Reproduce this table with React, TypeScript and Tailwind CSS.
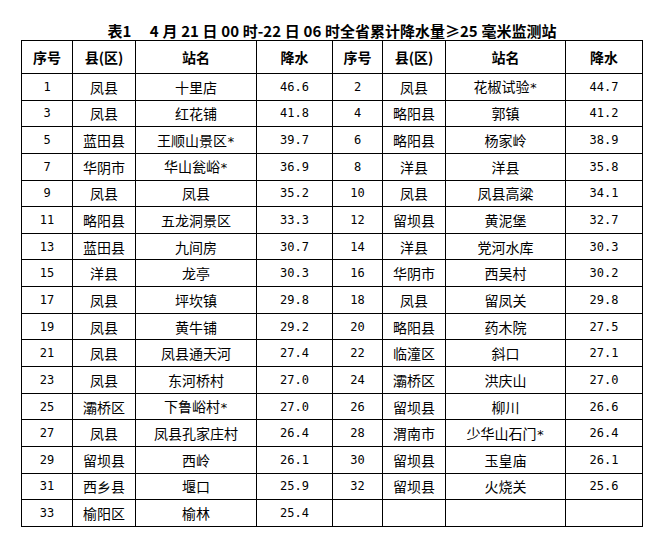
const rows: [string, string, string, string, string, string, string, string][] = [
  ["1", "凤县", "十里店", "46.6", "2", "凤县", "花椒试验*", "44.7"],
  ["3", "凤县", "红花铺", "41.8", "4", "略阳县", "郭镇", "41.2"],
  ["5", "蓝田县", "王顺山景区*", "39.7", "6", "略阳县", "杨家岭", "38.9"],
  ["7", "华阴市", "华山瓮峪*", "36.9", "8", "洋县", "洋县", "35.8"],
  ["9", "凤县", "凤县", "35.2", "10", "凤县", "凤县高粱", "34.1"],
  ["11", "略阳县", "五龙洞景区", "33.3", "12", "留坝县", "黄泥堡", "32.7"],
  ["13", "蓝田县", "九间房", "30.7", "14", "洋县", "党河水库", "30.3"],
  ["15", "洋县", "龙亭", "30.3", "16", "华阴市", "西吴村", "30.2"],
  ["17", "凤县", "坪坎镇", "29.8", "18", "凤县", "留凤关", "29.8"],
  ["19", "凤县", "黄牛铺", "29.2", "20", "略阳县", "药木院", "27.5"],
  ["21", "凤县", "凤县通天河", "27.4", "22", "临潼区", "斜口", "27.1"],
  ["23", "凤县", "东河桥村", "27.0", "24", "灞桥区", "洪庆山", "27.0"],
  ["25", "灞桥区", "下鲁峪村*", "27.0", "26", "留坝县", "柳川", "26.6"],
  ["27", "凤县", "凤县孔家庄村", "26.4", "28", "渭南市", "少华山石门*", "26.4"],
  ["29", "留坝县", "西岭", "26.1", "30", "留坝县", "玉皇庙", "26.1"],
  ["31", "西乡县", "堰口", "25.9", "32", "留坝县", "火烧关", "25.6"],
  ["33", "榆阳区", "榆林", "25.4", "", "", "", ""],
]

const cjk = "font-['Noto_Sans_CJK_SC',sans-serif]"
const mono = "font-['DejaVu_Sans_Mono',monospace] text-[12px]"

function Head({ label }: { label: string }) {
  return <th className="border border-black font-bold text-[14px]">{label}</th>
}

// 站名里的 * 用等宽字体画，才会落在字中线附近
function Station({ name }: { name: string }) {
  if (!name.endsWith("*")) return <>{name}</>
  return (
    <>
      {name.slice(0, -1)}
      <span className={`${mono} text-[13px]`}>*</span>
    </>
  )
}

export default function App() {
  return (
    <div className={`w-[664px] h-[539px] bg-white text-black ${cjk}`}>
      <div className="pt-[21px] h-[40px] text-center text-[15px] font-bold leading-[19px] whitespace-pre">
        {"表1\u2003 4\u2005月\u200521\u2005日\u200500\u2005时-22\u2005日\u200506\u2005时全省累计降水量≥25\u2005毫米监测站"}
      </div>
      <table className="ml-[21px] w-[621px] border-collapse table-fixed">
        <colgroup>
          <col className="w-[51px]" />
          <col className="w-[63px]" />
          <col className="w-[121px]" />
          <col className="w-[76px]" />
          <col className="w-[50px]" />
          <col className="w-[63px]" />
          <col className="w-[120px]" />
          <col className="w-[77px]" />
        </colgroup>
        <thead>
          <tr className="h-[33px]">
            <Head label="序号" />
            <Head label="县(区)" />
            <Head label="站名" />
            <Head label="降水" />
            <Head label="序号" />
            <Head label="县(区)" />
            <Head label="站名" />
            <Head label="降水" />
          </tr>
        </thead>
        <tbody>
          {rows.map((r, i) => (
            <tr key={i} className="h-[26.65px]">
              {r.map((cell, j) => (
                <td
                  key={j}
                  className={`border border-black text-center p-0 leading-none ${
                    j % 4 === 0 || j % 4 === 3 ? mono : "text-[14px]"
                  }`}
                >
                  {j % 4 === 2 ? <Station name={cell} /> : cell}
                </td>
              ))}
            </tr>
          ))}
        </tbody>
      </table>
    </div>
  )
}
